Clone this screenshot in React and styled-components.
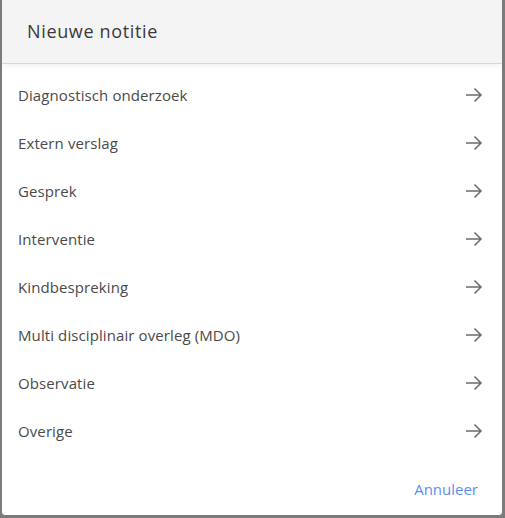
import React from 'react'
import styled, { createGlobalStyle } from 'styled-components'

const GlobalStyle = createGlobalStyle`
  html, body {
    margin: 0;
    padding: 0;
    background: #7b7b7b;
  }
  body {
    font-family: "Open Sans", "Liberation Sans", sans-serif;
  }
`

const items = [
  'Diagnostisch onderzoek',
  'Extern verslag',
  'Gesprek',
  'Interventie',
  'Kindbespreking',
  'Multi disciplinair overleg (MDO)',
  'Observatie',
  'Overige',
]

function ArrowIcon() {
  return (
    <svg width="20" height="20" viewBox="0 0 20 20" fill="none">
      <path d="M2 10h15M10.5 3.5L17 10l-6.5 6.5" stroke="#6a6a6a" strokeWidth="1.5" />
    </svg>
  )
}

export default function App() {
  return (
    <>
      <GlobalStyle />
      <Page>
        <Dialog>
          <Header>
            <Title>Nieuwe notitie</Title>
          </Header>
          <List>
            {items.map((label) => (
              <Row key={label}>
                <Label>{label}</Label>
                <ArrowIcon />
              </Row>
            ))}
          </List>
          <Footer>
            <CancelButton>Annuleer</CancelButton>
          </Footer>
        </Dialog>
      </Page>
    </>
  )
}

const Page = styled.div`
  width: 505px;
  height: 518px;
  padding: 0 3px 3px 2px;
  box-sizing: border-box;
`

const Dialog = styled.div`
  width: 500px;
  height: 515px;
  background: #fff;
  border-radius: 0 0 3px 3px;
  display: flex;
  flex-direction: column;
  overflow: hidden;
`

const Header = styled.div`
  height: 64px;
  box-sizing: border-box;
  background: #f4f4f4;
  border-bottom: 1px solid #d6d6d6;
  box-shadow: 0 2px 6px rgba(0, 0, 0, 0.06);
  display: flex;
  align-items: center;
  padding: 0 25px 2px;
`

const Title = styled.h2`
  margin: 0;
  font-size: 18px;
  font-weight: 400;
  color: #3a3a3a;
  letter-spacing: 0.65px;
`

const List = styled.div`
  display: flex;
  flex-direction: column;
  padding-top: 7px;
`

const Row = styled.div`
  height: 48px;
  display: flex;
  align-items: center;
  justify-content: space-between;
  padding: 0 18px 0 16px;
  cursor: pointer;
`

const Label = styled.span`
  font-size: 15px;
  color: #4a4a4a;
  letter-spacing: 0.1px;
`

const Footer = styled.div`
  flex: 1;
  display: flex;
  justify-content: flex-end;
  align-items: flex-end;
  padding: 0 24px 16px 0;
`

const CancelButton = styled.button`
  all: unset;
  font-family: inherit;
  font-size: 15px;
  color: #5b8ef0;
  cursor: pointer;
`
